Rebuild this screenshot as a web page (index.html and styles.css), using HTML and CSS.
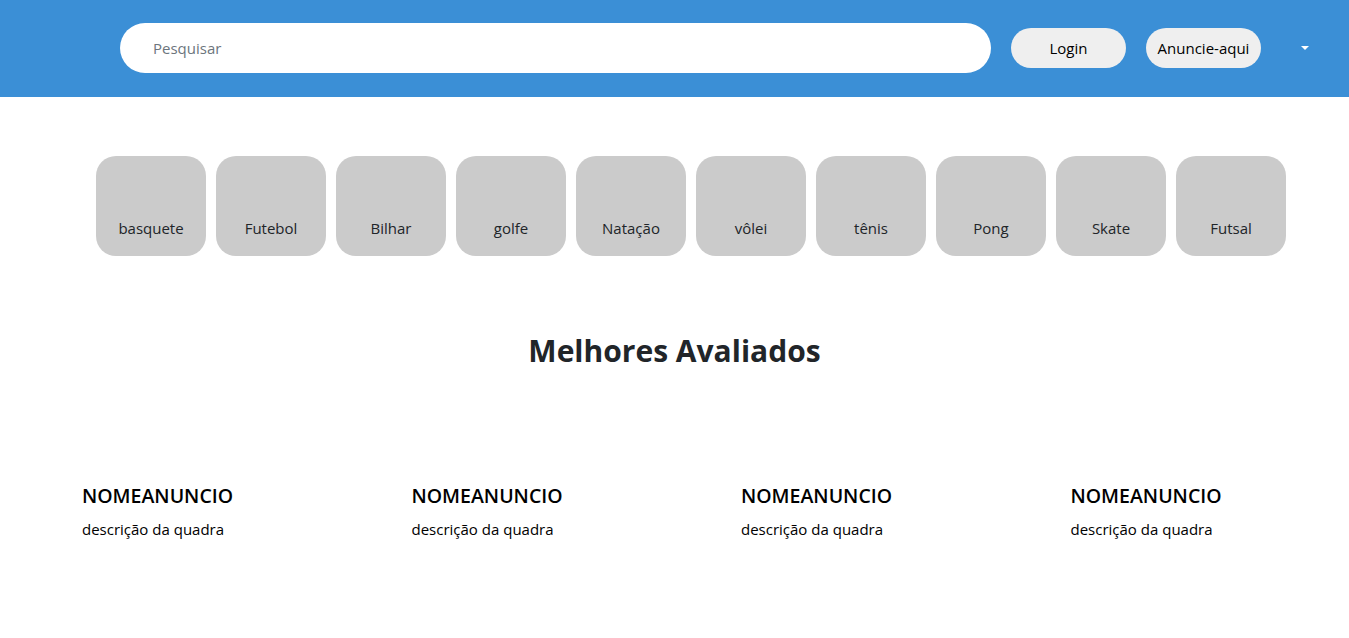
FILE: index.html
```html
<!DOCTYPE html>
<html lang="pt-BR">
<head>
<meta charset="utf-8">
<title>Quadras</title>
<link rel="stylesheet" href="styles.css">
</head>
<body>
<header class="topbar">
  <input class="search" type="text" placeholder="Pesquisar">
  <button class="pill login">Login</button>
  <button class="pill anuncie">Anuncie-aqui</button>
  <span class="caret"></span>
</header>
<main>
  <nav class="cats">
    <div class="cat">basquete</div>
    <div class="cat">Futebol</div>
    <div class="cat">Bilhar</div>
    <div class="cat">golfe</div>
    <div class="cat">Natação</div>
    <div class="cat">vôlei</div>
    <div class="cat">tênis</div>
    <div class="cat">Pong</div>
    <div class="cat">Skate</div>
    <div class="cat">Futsal</div>
  </nav>
  <h1 class="title">Melhores Avaliados</h1>
  <section class="cards">
    <div class="card"><h2>NOMEANUNCIO</h2><p>descrição da quadra</p></div>
    <div class="card"><h2>NOMEANUNCIO</h2><p>descrição da quadra</p></div>
    <div class="card"><h2>NOMEANUNCIO</h2><p>descrição da quadra</p></div>
    <div class="card"><h2>NOMEANUNCIO</h2><p>descrição da quadra</p></div>
  </section>
</main>
</body>
</html>
```

FILE: styles.css
```css
* { box-sizing: border-box; }
body {
  margin: 0;
  font-family: "Open Sans", "Noto Sans", sans-serif;
  color: #212529;
  background: #fff;
}
.topbar {
  height: 97px;
  background: #3b8fd6;
  display: flex;
  align-items: flex-start;
  padding: 23px 0 0 120px;
}
.search {
  width: 871px;
  height: 50px;
  border: none;
  border-radius: 25px;
  background: #fff;
  padding: 0 0 0 33px;
  font-family: inherit;
  font-size: 15px;
  outline: none;
}
.search::placeholder { color: #6c757d; }
.pill {
  margin-top: 5px;
  width: 115px;
  height: 40px;
  border: none;
  border-radius: 20px;
  background: #efefef;
  color: #000;
  font-family: inherit;
  font-size: 15px;
  padding: 0;
}
.login { margin-left: 20px; }
.anuncie { margin-left: 20px; }
.caret {
  margin: 23px 0 0 40px;
  width: 0;
  height: 0;
  border-left: 4px solid transparent;
  border-right: 4px solid transparent;
  border-top: 4px solid #fff;
}
.cats {
  display: flex;
  gap: 10px;
  padding: 59px 0 0 96px;
}
.cat {
  width: 110px;
  height: 100px;
  border-radius: 20px;
  background: #cbcbcb;
  display: flex;
  align-items: flex-end;
  justify-content: center;
  padding-bottom: 18px;
  font-size: 15px;
  color: #212529;
}
.title {
  margin: 75px 0 0;
  text-align: center;
  font-size: 30px;
  font-weight: 700;
  line-height: 40px;
}
.cards {
  display: grid;
  grid-template-columns: repeat(4, 329.5px);
  padding-left: 82px;
  margin-top: 112px;
}
.card h2 {
  margin: 0;
  font-size: 19.5px;
  font-weight: 600;
  line-height: 26px;
  color: #000;
}
.card p {
  margin: 10px 0 0;
  font-size: 15px;
  line-height: 20px;
  color: #000;
}
```
